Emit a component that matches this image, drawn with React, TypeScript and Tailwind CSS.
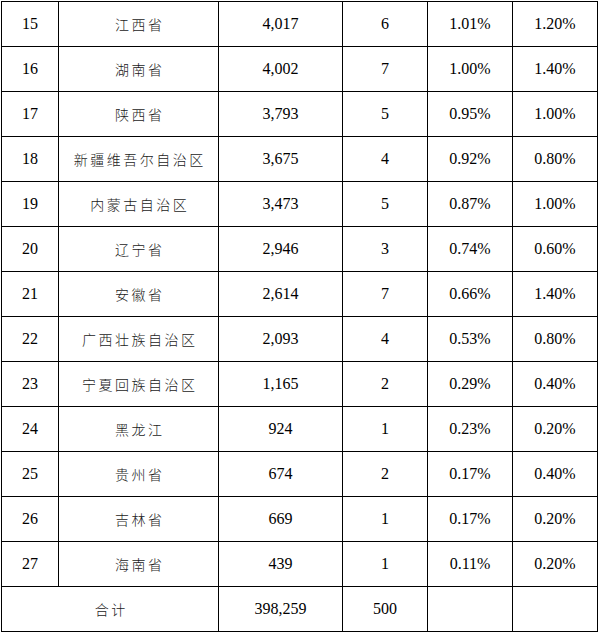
const rows: [string, string, string, string, string, string][] = [
  ["15", "江西省", "4,017", "6", "1.01%", "1.20%"],
  ["16", "湖南省", "4,002", "7", "1.00%", "1.40%"],
  ["17", "陕西省", "3,793", "5", "0.95%", "1.00%"],
  ["18", "新疆维吾尔自治区", "3,675", "4", "0.92%", "0.80%"],
  ["19", "内蒙古自治区", "3,473", "5", "0.87%", "1.00%"],
  ["20", "辽宁省", "2,946", "3", "0.74%", "0.60%"],
  ["21", "安徽省", "2,614", "7", "0.66%", "1.40%"],
  ["22", "广西壮族自治区", "2,093", "4", "0.53%", "0.80%"],
  ["23", "宁夏回族自治区", "1,165", "2", "0.29%", "0.40%"],
  ["24", "黑龙江", "924", "1", "0.23%", "0.20%"],
  ["25", "贵州省", "674", "2", "0.17%", "0.40%"],
  ["26", "吉林省", "669", "1", "0.17%", "0.20%"],
  ["27", "海南省", "439", "1", "0.11%", "0.20%"],
];

const cell = "border border-black p-0 h-[45px] text-center align-middle";
const cjk = "font-['Noto_Sans_CJK_SC',sans-serif] font-light text-[14px] tracking-[2.5px] pl-[2.5px] text-[#1a1a1a]";

export default function App() {
  return (
    <div className="bg-white w-[599px] h-[634px] pt-px pl-px text-black font-['Liberation_Serif',serif] text-[16px] leading-none">
      <table className="table-fixed border-collapse w-[596px]">
        <colgroup>
          <col className="w-[57px]" />
          <col className="w-[160px]" />
          <col className="w-[124px]" />
          <col className="w-[85px]" />
          <col className="w-[85px]" />
          <col className="w-[85px]" />
        </colgroup>
        <tbody>
          {rows.map((r) => (
            <tr key={r[0]}>
              <td className={cell}>{r[0]}</td>
              <td className={`${cell} ${cjk}`}>{r[1]}</td>
              <td className={cell}>{r[2]}</td>
              <td className={cell}>{r[3]}</td>
              <td className={cell}>{r[4]}</td>
              <td className={cell}>{r[5]}</td>
            </tr>
          ))}
          <tr>
            <td colSpan={2} className={`${cell} ${cjk}`}>
              合计
            </td>
            <td className={cell}>398,259</td>
            <td className={cell}>500</td>
            <td className={cell}></td>
            <td className={cell}></td>
          </tr>
        </tbody>
      </table>
    </div>
  );
}
